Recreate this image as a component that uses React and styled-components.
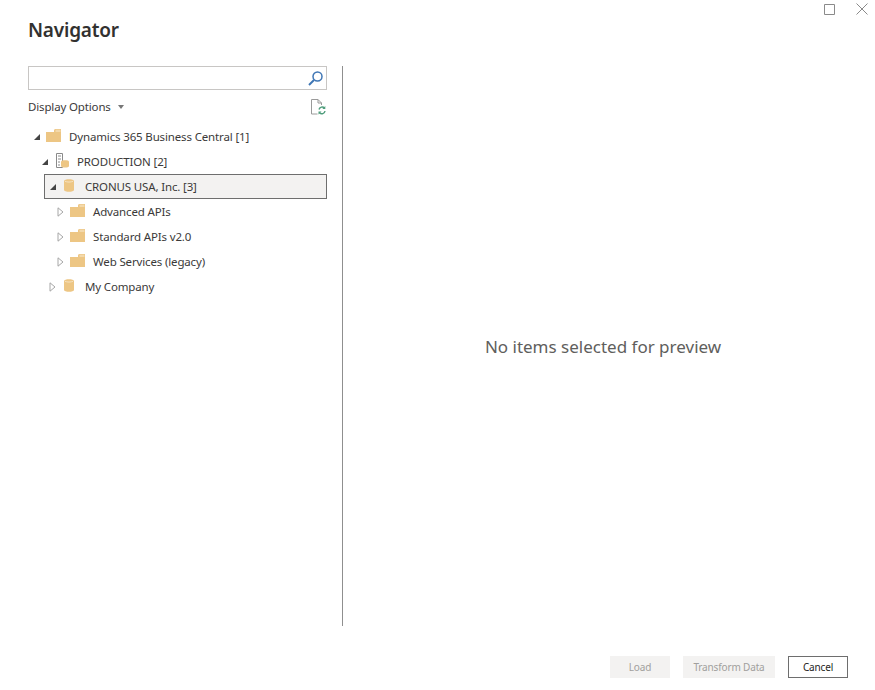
import styled, { createGlobalStyle } from "styled-components";

const GlobalStyle = createGlobalStyle`
  html, body {
    margin: 0;
    padding: 0;
    background: #fff;
  }
  body {
    font-family: "Noto Sans", "Open Sans", "Liberation Sans", sans-serif;
    color: #3b3a39;
  }
`;

const FOLDER = "#edc684";

function Expanded() {
  return (
    <svg width="6" height="6" viewBox="0 0 6 6">
      <path d="M6 0v6H0z" fill="#444" />
    </svg>
  );
}

function Collapsed() {
  return (
    <svg width="7" height="10" viewBox="0 0 7 10">
      <path d="M1 .8v8.400L6 5z" fill="#fff" stroke="#a6a6a6" />
    </svg>
  );
}

function FolderIcon() {
  return (
    <svg width="15" height="13" viewBox="0 0 15 13">
      <path d="M0 3h8V1.500C8 .7 8.700 0 9.500 0H15v13H0z" fill={FOLDER} />
      <path d="M9.500 .6h5V3h-5z" fill="#f3d9ab" />
    </svg>
  );
}

function DbIcon() {
  return (
    <svg width="10" height="13" viewBox="0 0 10 13">
      <path d="M0 2c0-2.400 10-2.400 10 0v9c0 2.400-10 2.400-10 0z" fill={FOLDER} />
      <path d="M1 2.300c2 1 6 1 8 0" fill="none" stroke="#f6e2c0" />
    </svg>
  );
}

function ServerIcon() {
  return (
    <svg width="13" height="15" viewBox="0 0 13 15">
      <path d="M.5.500h6v14h-6z" fill="#fff" stroke="#8a8a8a" />
      <path d="M2 3h3M2 6h3M2 9h2M2 12h2" stroke="#8a8a8a" />
      <path d="M5 8.500c0-1.800 8-1.800 8 0V13c0 2-8 2-8 0z" fill={FOLDER} />
    </svg>
  );
}

function SearchIcon() {
  return (
    <svg width="15" height="15" viewBox="0 0 15 15">
      <circle cx="9.500" cy="5.500" r="4.500" fill="none" stroke="#3f76b5" strokeWidth="1.500" />
      <path d="M6 9L1 14" stroke="#3f76b5" strokeWidth="2" />
    </svg>
  );
}

function RefreshDocIcon() {
  return (
    <svg width="15" height="16" viewBox="0 0 15 16">
      <path d="M.5.500h6.500l3.500 3.500v2M.5.500v14.500h6" fill="none" stroke="#9a9a9a" />
      <path d="M7 .5V4h3.500" fill="none" stroke="#9a9a9a" />
      <path d="M8 10.500a3.200 3.200 0 0 1 5.500-1.500M14 12a3.200 3.200 0 0 1-5.500 1.800" fill="none" stroke="#4f9d7c" strokeWidth="1.400" />
      <path d="M14.300 7v3h-3zM7.500 15.500v-3h3z" fill="#4f9d7c" />
    </svg>
  );
}

const Page = styled.div`
  width: 875px;
  height: 690px;
  display: flex;
  flex-direction: column;
  overflow: hidden;
`;

const WindowBar = styled.div`
  height: 18px;
  display: flex;
  justify-content: flex-end;
  align-items: flex-start;
  gap: 21px;
  padding: 3px 7px 0 0;
  box-sizing: border-box;
`;

const WindowButton = styled.svg`
  width: 12px;
  height: 12px;
  display: block;
`;

const Title = styled.h1`
  height: 48px;
  margin: 0;
  padding-left: 28px;
  font-size: 19px;
  line-height: 24px;
  letter-spacing: -0.2px;
  font-weight: 600;
  color: #323130;
`;

const Body = styled.div`
  height: 560px;
  display: flex;
`;

const LeftPane = styled.div`
  width: 343px;
  box-sizing: border-box;
  padding: 0 15px 0 28px;
  border-right: 1px solid #8f8f8f;
`;

const SearchBox = styled.div`
  height: 24px;
  box-sizing: border-box;
  border: 1px solid #c8c6c4;
  display: flex;
  align-items: center;
  justify-content: flex-end;
  padding-right: 3px;
`;

const OptionsRow = styled.div`
  height: 34px;
  display: flex;
  align-items: center;
  justify-content: space-between;
  padding-right: 1px;
`;

const OptionsLabel = styled.span`
  display: flex;
  align-items: center;
  gap: 7px;
  margin-top: -1px;
  font-size: 11.500px;
  letter-spacing: -0.15px;
`;

const Caret = styled.i`
  width: 0;
  height: 0;
  border-left: 3.500px solid transparent;
  border-right: 3.500px solid transparent;
  border-top: 4px solid #777;
`;

const TreeRow = styled.div`
  height: 25px;
  box-sizing: border-box;
  margin-left: ${(p) => p.$level * 8}px;
  padding-left: 3px;
  display: flex;
  align-items: center;
  border: 1px solid ${(p) => (p.$selected ? "#6e6e6e" : "transparent")};
  background: ${(p) => (p.$selected ? "#f3f2f1" : "transparent")};
`;

const ArrowSlot = styled.span`
  width: 9px;
  display: flex;
  justify-content: center;
`;

const IconSlot = styled.span`
  width: 24px;
  display: flex;
  justify-content: center;
  margin-top: -2px;
  padding-left: ${(p) => (p.$shift ? 3 : 0)}px;
  box-sizing: border-box;
`;

const TreeLabel = styled.span`
  margin-left: 4px;
  font-size: 11.500px;
  letter-spacing: -0.15px;
  white-space: nowrap;
`;

const Preview = styled.div`
  flex: 1;
  display: flex;
  align-items: center;
  justify-content: center;
  padding: 1px 12px 0 0;
  font-size: 17px;
  color: #605e5c;
`;

const Footer = styled.div`
  flex: 1;
  display: flex;
  justify-content: flex-end;
  gap: 13px;
  padding: 30px 27px 0 0;
`;

const Button = styled.button`
  width: ${(p) => p.$width}px;
  height: 22px;
  box-sizing: border-box;
  padding: 0 0 1px;
  font-family: inherit;
  font-size: 10px;
  letter-spacing: -0.15px;
  color: ${(p) => (p.disabled ? "#a19f9d" : "#252423")};
  background: ${(p) => (p.disabled ? "#f3f2f1" : "#fff")};
  border: 1px solid ${(p) => (p.disabled ? "#f3f2f1" : "#6e6e6e")};
`;

const tree = [
  { level: 0, open: true, icon: <FolderIcon />, label: "Dynamics 365 Business Central [1]" },
  { level: 1, open: true, shift: true, icon: <ServerIcon />, label: "PRODUCTION [2]" },
  { level: 2, open: true, selected: true, icon: <DbIcon />, label: "CRONUS USA, Inc. [3]" },
  { level: 3, icon: <FolderIcon />, label: "Advanced APIs" },
  { level: 3, icon: <FolderIcon />, label: "Standard APIs v2.0" },
  { level: 3, icon: <FolderIcon />, label: "Web Services (legacy)" },
  { level: 2, icon: <DbIcon />, label: "My Company" },
];

export default function App() {
  return (
    <Page>
      <GlobalStyle />
      <WindowBar>
        <WindowButton viewBox="0 0 12 12">
          <path d="M1.500 1.500h10v10h-10z" fill="none" stroke="#8a8a8a" />
        </WindowButton>
        <WindowButton viewBox="0 0 12 12">
          <path d="M.5.500l11 11M11.500.500l-11 11" fill="none" stroke="#8a8a8a" />
        </WindowButton>
      </WindowBar>
      <Title>Navigator</Title>
      <Body>
        <LeftPane>
          <SearchBox>
            <SearchIcon />
          </SearchBox>
          <OptionsRow>
            <OptionsLabel>
              Display Options <Caret />
            </OptionsLabel>
            <RefreshDocIcon />
          </OptionsRow>
          {tree.map((row) => (
            <TreeRow key={row.label} $level={row.level} $selected={row.selected}>
              <ArrowSlot>{row.open ? <Expanded /> : <Collapsed />}</ArrowSlot>
              <IconSlot $shift={row.shift}>{row.icon}</IconSlot>
              <TreeLabel>{row.label}</TreeLabel>
            </TreeRow>
          ))}
        </LeftPane>
        <Preview>No items selected for preview</Preview>
      </Body>
      <Footer>
        <Button disabled $width={60}>Load</Button>
        <Button disabled $width={92}>Transform Data</Button>
        <Button $width={60}>Cancel</Button>
      </Footer>
    </Page>
  );
}
